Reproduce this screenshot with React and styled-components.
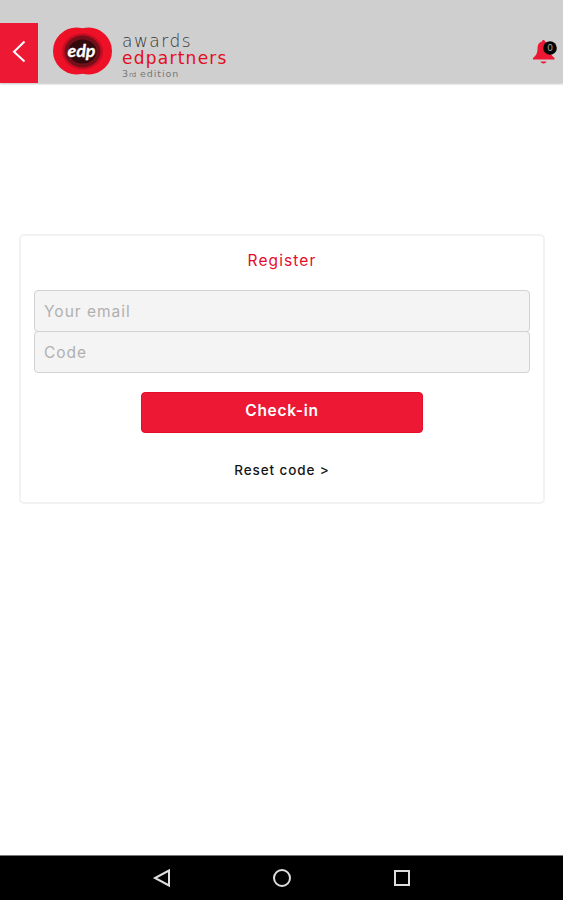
import React from "react";
import styled, { createGlobalStyle } from "styled-components";

const GlobalStyle = createGlobalStyle`
  * {
    box-sizing: border-box;
  }
  body {
    margin: 0;
    background-color: white;
    font-family: Inter, "Liberation Sans", sans-serif;
  }
`;

const Screen = styled.div`
  display: flex;
  flex-direction: column;
  height: 900px;
  overflow: hidden;
`;

const Header = styled.header`
  display: flex;
  align-items: stretch;
  height: 83px;
  padding-top: 23px;
  background-color: #cfcfcf;
  box-shadow: 0 1px 2px rgba(0, 0, 0, 0.25);
`;

const BackButton = styled.button`
  display: flex;
  width: 38px;
  padding: 0;
  border: none;
  background-color: #ed1834;
  cursor: pointer;
`;

const Brand = styled.div`
  display: flex;
  flex: 1;
  padding-left: 14px;
`;

const BrandLogo = styled.svg`
  flex: none;
  margin-top: 4px;
`;

const BrandName = styled.div`
  display: flex;
  flex-direction: column;
  align-items: flex-start;
  padding: 9px 0 0 9px;
  white-space: nowrap;
`;

const BrandLine = styled.span`
  height: ${(props) => props.$height}px;
  line-height: ${(props) => props.$height}px;
  font-family: "DejaVu Sans", sans-serif;
  font-size: ${(props) => props.$size}px;
  font-weight: ${(props) => props.$weight || 400};
  letter-spacing: ${(props) => props.$spacing}px;
  color: ${(props) => props.$color};

  small {
    font-size: 7px;
    line-height: 0;
    letter-spacing: 0;
  }
`;

const Notifications = styled.button`
  display: flex;
  padding: 14px 5px 0 0;
  border: none;
  background: none;
  cursor: pointer;
`;

const Main = styled.main`
  flex: 1;
  padding: 151px 18px 0 19px;
`;

const Card = styled.form`
  display: flex;
  flex-direction: column;
  align-items: center;
  height: 270px;
  padding: 15px 13px 0;
  border: 2px solid #f2f2f2;
  border-radius: 5px;
`;

const Title = styled.h1`
  height: 20px;
  margin: 0 0 19px;
  font-size: 15.5px;
  font-weight: 400;
  line-height: 20px;
  letter-spacing: 1.1px;
  color: #e30d2b;
`;

const Field = styled.input`
  display: block;
  width: 100%;
  height: 42px;
  margin-bottom: -1px;
  padding: 1px 9px 0;
  border: 1px solid #d2d2d2;
  border-radius: 4px;
  background-color: #f4f4f4;
  font-family: inherit;
  font-size: 15.5px;
  letter-spacing: 1px;
  outline: none;

  &::placeholder {
    color: #b0b0b0;
    opacity: 1;
  }
`;

const SubmitButton = styled.button`
  width: 282px;
  height: 41px;
  margin-top: 20px;
  padding: 0 0 4px;
  border: 1px solid #e60d29;
  border-radius: 4px;
  background-color: #ed1834;
  font-family: inherit;
  font-size: 15.5px;
  font-weight: 600;
  letter-spacing: 0.7px;
  color: white;
  cursor: pointer;
`;

const ResetLink = styled.a`
  margin-top: 27px;
  font-size: 13.5px;
  font-weight: 500;
  line-height: 20px;
  letter-spacing: 0.9px;
  color: #161616;
  cursor: pointer;
`;

const NavBar = styled.nav`
  display: flex;
  align-items: center;
  justify-content: center;
  gap: 100px;
  height: 45px;
  border-top: 1px solid #777;
  background-color: black;
`;

const NavIcon = styled.svg`
  width: 20px;
  height: 20px;
  fill: none;
  stroke: #dedede;
  stroke-width: 2;
`;

const Logo = () => (
  <BrandLogo width="61" height="49" viewBox="0 0 61 49">
    <circle cx="24.5" cy="24" r="23.5" fill="#ed1027" />
    <circle cx="36.5" cy="24" r="23.5" fill="#ed1027" />
    <ellipse cx="30.5" cy="24.5" rx="20.5" ry="18" fill="#c80d22" />
    <ellipse cx="30.5" cy="24.5" rx="18" ry="16" fill="#74101a" />
    <ellipse cx="30.5" cy="24.5" rx="14" ry="12" fill="#32090d" />
    <text
      x="15.5"
      y="29.5"
      textLength="28"
      lengthAdjust="spacingAndGlyphs"
      fontFamily="Lato, sans-serif"
      fontSize="17"
      fontStyle="italic"
      fontWeight="700"
      fill="white"
      stroke="white"
      strokeWidth="0.3"
    >
      edp
    </text>
  </BrandLogo>
);

const Bell = () => (
  <svg width="26" height="28" viewBox="0 0 26 28">
    <path
      d="M11.500 3c.9 0 1.4.6 1.500 1.500 3.300.9 4.800 3.500 4.800 7 0 4.500 1.400 7 4.700 9.500v1.500H1V21c3.300-2.500 4.500-5 4.500-9.500 0-3.500 1.200-6.100 4.500-7C10.100 3.600 10.600 3 11.500 3z"
      fill="#ed1834"
    />
    <path d="M8.500 24.500h6c-.5 1.300-1.500 2-3 2s-2.500-.7-3-2z" fill="#ed1834" />
    <circle cx="18" cy="11" r="6.800" fill="#050505" />
    <text
      x="18"
      y="14"
      textAnchor="middle"
      fontFamily="Inter, sans-serif"
      fontSize="9"
      fill="#aaa"
    >
      0
    </text>
  </svg>
);

const App = () => (
  <>
    <GlobalStyle />
    <Screen>
      <Header>
        <BackButton type="button" aria-label="Back">
          <svg width="38" height="60" viewBox="0 0 38 60">
            <path
              d="M24.500 18.500 14 28.700 24.500 38.500"
              fill="none"
              stroke="white"
              strokeWidth="2"
            />
          </svg>
        </BackButton>
        <Brand>
          <Logo />
          <BrandName>
            <BrandLine $height={18} $size={17} $weight={200} $spacing={1.5} $color="#333">
              awards
            </BrandLine>
            <BrandLine $height={17} $size={17} $spacing={1.25} $color="#e30d20">
              edpartners
            </BrandLine>
            <BrandLine $height={13} $size={9.5} $spacing={0.9} $color="#777">
              3<small>rd</small> edition
            </BrandLine>
          </BrandName>
        </Brand>
        <Notifications type="button" aria-label="Notifications">
          <Bell />
        </Notifications>
      </Header>

      <Main>
        <Card>
          <Title>Register</Title>
          <Field type="email" placeholder="Your email" />
          <Field type="text" placeholder="Code" />
          <SubmitButton type="button">Check-in</SubmitButton>
          <ResetLink>Reset code &gt;</ResetLink>
        </Card>
      </Main>

      <NavBar>
        <NavIcon viewBox="0 0 20 20">
          <path d="M17 2.500v15L3 10z" />
        </NavIcon>
        <NavIcon viewBox="0 0 20 20">
          <circle cx="10" cy="10" r="8" />
        </NavIcon>
        <NavIcon viewBox="0 0 20 20">
          <rect x="3" y="3" width="14" height="14" />
        </NavIcon>
      </NavBar>
    </Screen>
  </>
);

export default App;
